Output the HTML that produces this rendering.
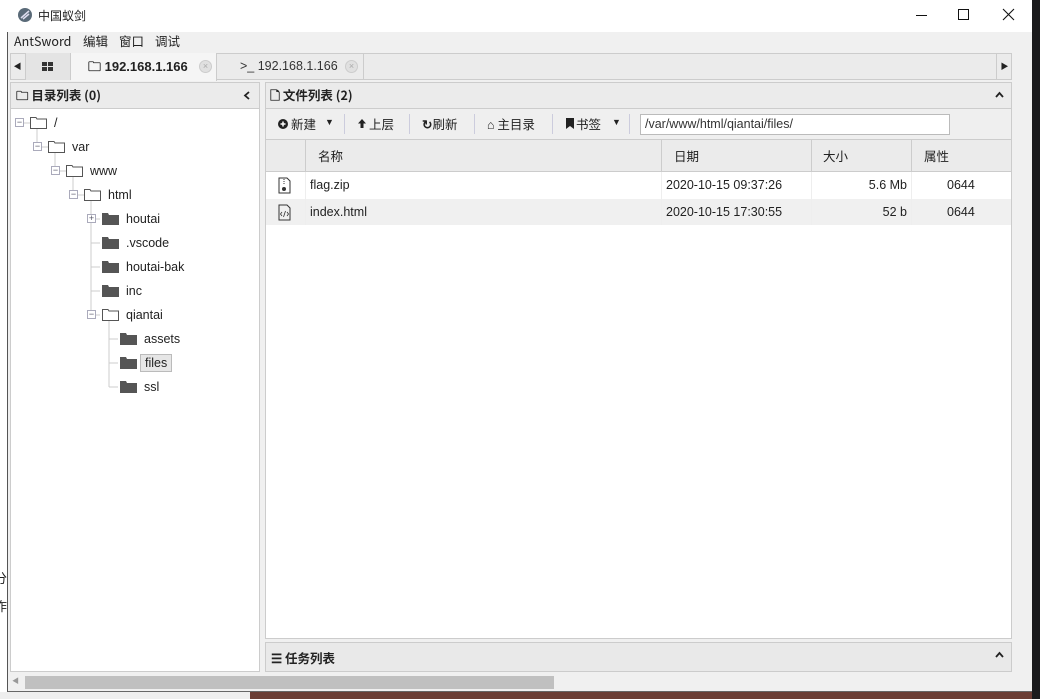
<!DOCTYPE html><html><head><meta charset="utf-8"><style>
*{margin:0;padding:0;box-sizing:border-box}
body{width:1040px;height:699px;overflow:hidden;background:#1b1b1d;font-family:"Liberation Sans","Noto Sans CJK SC",sans-serif;font-size:12px;color:#222;position:relative}
.a{position:absolute}
.cj{font-family:"Noto Sans CJK SC","Liberation Sans",sans-serif}
</style></head><body>
<div class="a" style="left:0;top:0;width:1032px;height:692px;background:#fff"></div>
<div class="a" style="left:0;top:692px;width:250px;height:7px;background:#eee"></div>
<div class="a" style="left:250px;top:692px;width:782px;height:7px;background:#6b3d35"></div>
<div class="a cj" style="left:-6px;top:568px;font-size:13px">分</div>
<div class="a cj" style="left:-6px;top:596px;font-size:13px">作</div>
<div class="a" style="left:7px;top:32px;width:1025px;height:660px;background:#f0f0f0;border-left:1px solid #555;border-bottom:1px solid #666"></div>
<svg class="a" style="left:17px;top:7px" width="16" height="16"><circle cx="8" cy="8" r="7" fill="#5a6a78"/><path d="M4 11 L12 4 M6 12 L12 7" stroke="#dde" stroke-width="1.5"/></svg>
<div class="a cj" style="left:38px;top:7px;font-size:12px">中国蚁剑</div>
<div class="a" style="left:916px;top:15px;width:11px;height:1px;background:#111"></div>
<div class="a" style="left:958px;top:9px;width:11px;height:11px;border:1px solid #111"></div>
<svg class="a" style="left:1002px;top:8px" width="13" height="13"><path d="M1 1L12 12M12 1L1 12" stroke="#111" stroke-width="1.1"/></svg>
<div class="a cj" style="left:14px;top:31px;font-size:12.5px">AntSword</div>
<div class="a cj" style="left:83px;top:31px;font-size:12.5px">编辑</div>
<div class="a cj" style="left:119px;top:31px;font-size:12.5px">窗口</div>
<div class="a cj" style="left:155px;top:31px;font-size:12.5px">调试</div>
<div class="a" style="left:10px;top:53px;width:1002px;height:27px;background:#ebebeb;border:1px solid #ccc"></div>
<div class="a" style="left:10px;top:53px;width:16px;height:27px;border-right:1px solid #ccc;font-size:8px;line-height:27px;text-align:center">◀</div>
<div class="a" style="left:26px;top:53px;width:45px;height:27px;background:#e4e4e4;border-right:1px solid #ccc"></div>
<svg class="a" style="left:42px;top:62px" width="11" height="9"><rect x="0" y="0" width="5" height="4" fill="#333"/><rect x="6" y="0" width="5" height="4" fill="#333"/><rect x="0" y="5" width="5" height="4" fill="#333"/><rect x="6" y="5" width="5" height="4" fill="#333"/></svg>
<div class="a" style="left:71px;top:53px;width:146px;height:28px;background:#f5f5f5;border-right:1px solid #ccc"></div>
<div class="a" style="left:88px;top:58px;font-size:13px;font-weight:bold">🗀 192.168.1.166</div>
<div class="a" style="left:199px;top:60px;width:13px;height:13px;border-radius:50%;background:#e0e0e0;border:1px solid #ccc;font-size:9px;line-height:11px;text-align:center;color:#aaa">×</div>
<div class="a" style="left:218px;top:53px;width:146px;height:27px;border-right:1px solid #ccc"></div>
<div class="a" style="left:240px;top:59px;font-size:12.5px;color:#333">&gt;_ 192.168.1.166</div>
<div class="a" style="left:345px;top:60px;width:13px;height:13px;border-radius:50%;background:#e0e0e0;border:1px solid #ccc;font-size:9px;line-height:11px;text-align:center;color:#aaa">×</div>
<div class="a" style="left:996px;top:53px;width:16px;height:27px;border-left:1px solid #ccc;font-size:8px;line-height:27px;text-align:center">▶</div>
<div class="a" style="left:10px;top:82px;width:250px;height:590px;background:#fff;border:1px solid #ccc"></div>
<div class="a" style="left:10px;top:82px;width:250px;height:27px;background:#ebebeb;border:1px solid #ccc"></div>
<div class="a cj" style="left:16px;top:85px;font-size:12.5px;font-weight:bold">🗀 目录列表 (0)</div>
<svg class="a" style="left:243px;top:91px" width="8" height="9"><path d="M6 1L2 4.5L6 8" fill="none" stroke="#222" stroke-width="1.8"/></svg>
<div class="a" style="left:261px;top:82px;width:4px;height:590px;background:#f0f0f0"></div>
<svg class="a" style="left:10px;top:108px" width="250" height="300">
<g stroke="#ccc" fill="none">
<path d="M27 20V39M45 44V63M63 68V87M81 92V207M81 111H90M81 135H90M81 159H90M81 183H90M81 207H90M99 212V279M99 231H108M99 255H108M99 279H108M12 15H18M30 39H36M48 63H54M66 87H72M17 15h3M35 39h3M53 63h3M71 87h3M87 111h3"/>
</g>
</svg>
<div id="tree"></div>
<div class="a" style="left:265px;top:82px;width:747px;height:557px;background:#fff;border:1px solid #ccc"></div>
<div class="a" style="left:265px;top:82px;width:747px;height:27px;background:#ebebeb;border:1px solid #ccc"></div>
<div class="a cj" style="left:270px;top:85px;font-size:12.5px;font-weight:bold">🗋 文件列表 (2)</div>
<svg class="a" style="left:995px;top:91px" width="9" height="7"><path d="M1 6L4.5 2L8 6" fill="none" stroke="#222" stroke-width="1.8"/></svg>
<div class="a" style="left:266px;top:109px;width:745px;height:31px;background:#efefef;border-bottom:1px solid #ccc"></div>
<svg class="a" style="left:278px;top:119px" width="10" height="10"><circle cx="5" cy="5" r="5" fill="#222"/><path d="M5 2.5v5M2.5 5h5" stroke="#fff" stroke-width="1.5"/></svg>
<div class="a cj" style="left:291px;top:114px;font-size:12.5px">新建</div>
<div class="a" style="left:325px;top:117px;font-size:9px">▼</div>
<svg class="a" style="left:357px;top:118px" width="10" height="11"><path d="M5 1L1 5.5H3.5V10H6.5V5.5H9Z" fill="#222"/></svg>
<div class="a cj" style="left:369px;top:114px;font-size:12.5px">上层</div>
<div class="a cj" style="left:422px;top:114px;font-size:12.5px"><b>↻</b>刷新</div>
<div class="a cj" style="left:487px;top:114px;font-size:12.5px">⌂ 主目录</div>
<svg class="a" style="left:566px;top:118px" width="8" height="11"><path d="M0 0H8V11L4 8L0 11Z" fill="#222"/></svg>
<div class="a cj" style="left:576px;top:114px;font-size:12.5px">书签</div>
<div class="a" style="left:612px;top:117px;font-size:9px">▼</div>
<div class="a" style="left:344px;top:114px;width:1px;height:20px;background:#ccd"></div>
<div class="a" style="left:409px;top:114px;width:1px;height:20px;background:#ccd"></div>
<div class="a" style="left:474px;top:114px;width:1px;height:20px;background:#ccd"></div>
<div class="a" style="left:552px;top:114px;width:1px;height:20px;background:#ccd"></div>
<div class="a" style="left:629px;top:114px;width:1px;height:20px;background:#ccd"></div>
<div class="a" style="left:640px;top:114px;width:310px;height:21px;background:#fff;border:1px solid #bbb;font-size:12.5px;padding:2px 4px;color:#333">/var/www/html/qiantai/files/</div>
<div class="a" style="left:266px;top:140px;width:745px;height:32px;background:#ebebeb;border-bottom:1px solid #ccc"></div>
<div class="a" style="left:305px;top:140px;width:1px;height:32px;background:#ccc"></div>
<div class="a" style="left:661px;top:140px;width:1px;height:32px;background:#ccc"></div>
<div class="a" style="left:811px;top:140px;width:1px;height:32px;background:#ccc"></div>
<div class="a" style="left:911px;top:140px;width:1px;height:32px;background:#ccc"></div>
<div class="a cj" style="left:318px;top:146px;font-size:12.5px">名称</div>
<div class="a cj" style="left:674px;top:146px;font-size:12.5px">日期</div>
<div class="a cj" style="left:823px;top:146px;font-size:12.5px">大小</div>
<div class="a cj" style="left:924px;top:146px;font-size:12.5px">属性</div>
<div class="a" style="left:266px;top:199px;width:745px;height:26px;background:#f0f0f0"></div>
<div class="a" style="left:305px;top:172px;width:1px;height:53px;background:#eee"></div>
<div class="a" style="left:661px;top:172px;width:1px;height:53px;background:#eee"></div>
<div class="a" style="left:811px;top:172px;width:1px;height:53px;background:#eee"></div>
<div class="a" style="left:911px;top:172px;width:1px;height:53px;background:#eee"></div>
<svg class="a" style="left:278px;top:177px" width="13" height="17"><path d="M1 1H9L12 4V16H1Z" fill="none" stroke="#333"/><path d="M6 2v6" stroke="#333" stroke-dasharray="1 1"/><circle cx="6" cy="12" r="2" fill="#333"/></svg>
<svg class="a" style="left:278px;top:204px" width="13" height="17"><path d="M1 1H9L12 4V16H1Z" fill="none" stroke="#333"/><path d="M4 8L2.5 10L4 12M9 8L10.5 10L9 12M7.5 7L5.5 13" fill="none" stroke="#333" stroke-width=".8"/></svg>
<div class="a" style="left:310px;top:178px;font-size:12.5px">flag.zip</div>
<div class="a" style="left:310px;top:205px;font-size:12.5px">index.html</div>
<div class="a" style="left:666px;top:178px;font-size:12.5px">2020-10-15 09:37:26</div>
<div class="a" style="left:666px;top:205px;font-size:12.5px">2020-10-15 17:30:55</div>
<div class="a" style="left:811px;top:178px;width:96px;text-align:right;font-size:12.5px">5.6 Mb</div>
<div class="a" style="left:811px;top:205px;width:96px;text-align:right;font-size:12.5px">52 b</div>
<div class="a" style="left:947px;top:178px;font-size:12.5px">0644</div>
<div class="a" style="left:947px;top:205px;font-size:12.5px">0644</div>
<div class="a" style="left:265px;top:642px;width:747px;height:30px;background:#e9e9e9;border:1px solid #ccc"></div>
<div class="a cj" style="left:271px;top:648px;font-size:12.5px;font-weight:bold">☰ 任务列表</div>
<svg class="a" style="left:995px;top:651px" width="9" height="7"><path d="M1 6L4.5 2L8 6" fill="none" stroke="#222" stroke-width="1.8"/></svg>
<div class="a" style="left:8px;top:672px;width:1024px;height:19px;background:#f0f0f0"></div>
<div class="a" style="left:12px;top:676px;font-size:7px;color:#999">◀</div>
<div class="a" style="left:25px;top:676px;width:529px;height:13px;background:#c0c0c0"></div>
<script>
var t=[[14,115,'m','o','/'],[32,139,'m','o','var'],[50,163,'m','o','www'],[68,187,'m','o','html'],[86,211,'p','f','houtai'],[86,235,'','f','.vscode'],[86,259,'','f','houtai-bak'],[86,283,'','f','inc'],[86,307,'m','o','qiantai'],[104,331,'','f','assets'],[104,355,'','f','files'],[104,379,'','f','ssl']];
var h='';t.forEach(function(r){var x=r[0]+10,y=r[1];
if(r[2])h+='<div class="a" style="left:'+(x-9)+'px;top:'+(y+3)+'px;width:9px;height:9px;border:1px solid #aab;background:#fff;font-size:9px;line-height:7px;text-align:center;color:#556">'+(r[2]=='m'?'−':'+')+'</div>';
if(r[3]=='o')h+='<svg class="a" style="left:'+(x+6)+'px;top:'+(y+1)+'px" width="17" height="13"><path d="M.5 1.5H6L7 3H16.5V12.5H.5Z" fill="#fff" stroke="#555"/></svg>';
else h+='<svg class="a" style="left:'+(x+6)+'px;top:'+(y+1)+'px" width="17" height="13"><path d="M0 1H6L7 3H17V13H0Z" fill="#555"/></svg>';
var sel=r[4]=='files';
h+='<div class="a" style="left:'+(x+30+(sel?-4:0))+'px;top:'+(y+1+(sel?-2:0))+'px;font-size:12.5px;'+(sel?'background:#e6e6e6;border:1px solid #bbb;padding:1px 4px;':'')+'">'+r[4]+'</div>';});
document.getElementById('tree').innerHTML=h;
</script>
</body></html>
